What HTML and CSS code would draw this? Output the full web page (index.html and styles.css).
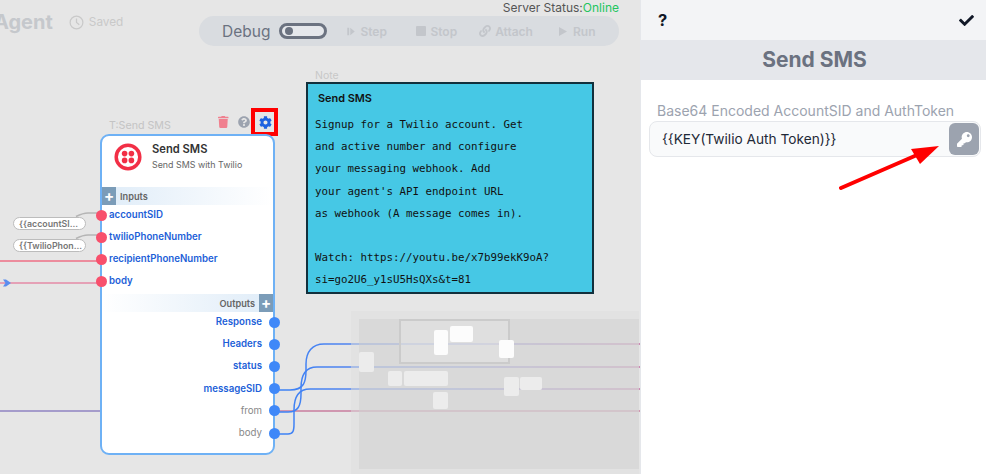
FILE: index.html
```html
<!DOCTYPE html>
<html lang="en">
<head>
    <meta charset="UTF-8">
    <meta name="viewport" content="width=device-width, initial-scale=1.0">
    <title>Send SMS - Agent</title>
    <link rel="stylesheet" href="styles.css">
</head>
<body>
    <div class="app">
        <!-- Canvas -->
        <main class="canvas">
            <header class="topbar">
                <div class="agent-info">
                    <h1 class="agent-name">Agent</h1>
                    <span class="saved">
                        <svg class="clock" viewBox="0 0 16 16"><circle cx="8" cy="8" r="6.8"/><path d="M8 3.6V8l3 2.4"/></svg>
                        Saved
                    </span>
                </div>
                <div class="controls">
                    <div class="server-status">Server Status:<span class="online">Online</span></div>
                    <div class="debug-bar">
                        <span class="debug-label">Debug</span>
                        <span class="toggle"><span class="toggle-dot"></span></span>
                        <span class="debug-btn btn-step">
                            <svg viewBox="0 0 10 12"><path d="M0 1h2.600v10H0zM4 1l6 5-6 5z"/></svg>Step
                        </span>
                        <span class="debug-btn btn-stop">
                            <svg viewBox="0 0 10 10"><rect width="10" height="10" rx="1"/></svg>Stop
                        </span>
                        <span class="debug-btn btn-attach">
                            <svg viewBox="0 0 512 512"><path d="M326.6 185.4c59.7 59.8 58.9 155.7.4 214.6l-67.2 67.2c-59.3 59.3-155.7 59.3-215 0-59.3-59.3-59.3-155.7 0-215l37.1-37.1c9.8-9.8 26.8-3.3 27.3 10.6.6 17.7 3.8 35.5 9.7 52.7 2 5.8.6 12.3-3.8 16.6l-13.1 13.1c-28 28-28.9 73.7-1.2 102 28 28.6 74.1 28.7 102.3.5l67.2-67.2c28.2-28.2 28.1-73.8 0-101.8-3.7-3.7-7.4-6.6-10.3-8.6-4.1-2.8-6.6-7.4-6.8-12.4-.4-10.6 3.3-21.5 11.7-29.8l21.1-21.1c5.5-5.5 14.2-6.2 20.6-1.7 7.3 5.1 14.2 10.9 20 16.8zM467.5 44.4c-59.3-59.3-155.7-59.3-215 0l-67.2 67.2-.4.4c-58.6 58.9-59.4 154.8.4 214.6 5.8 5.9 12.7 11.7 20 16.8 6.4 4.5 15.1 3.8 20.6-1.7l21.1-21.1c8.4-8.4 12.1-19.2 11.7-29.8-.2-5-2.7-9.6-6.8-12.4-2.9-2-6.6-4.9-10.3-8.6-28.1-28-28.2-73.6 0-101.8l67.2-67.2c28.2-28.2 74.3-28.1 102.3.5 27.7 28.3 26.8 74-1.2 102l-13.1 13.1c-4.4 4.3-5.8 10.8-3.8 16.6 5.9 17.2 9.1 35 9.7 52.7.5 13.9 17.5 20.4 27.3 10.6l37.1-37.1c59.3-59.3 59.3-155.7 0-215z"/></svg>Attach
                        </span>
                        <span class="debug-btn btn-run">
                            <svg viewBox="0 0 9 10"><path d="M0 0l9 5-9 5z"/></svg>Run
                        </span>
                    </div>
                </div>
            </header>

            <!-- Wires between nodes, minimap sits over them -->
            <svg class="wires" viewBox="0 0 640 474">
                <defs>
                    <linearGradient id="wireOut" gradientUnits="userSpaceOnUse" x1="275" y1="0" x2="640" y2="0">
                        <stop offset="0" stop-color="#3b82f6"/>
                        <stop offset="0.5" stop-color="#6f86e6"/>
                        <stop offset="1" stop-color="#c46ca4"/>
                    </linearGradient>
                </defs>
                <path class="wire-gray" d="M76 216.5c6-3 8-3.500 12-3.500h9"/>
                <path class="wire-gray" d="M76 238.500c6-3 8-3.500 12-3.500h9"/>
                <path class="wire-red" d="M0 261H100"/>
                <path class="wire-pink" d="M0 283H100"/>
                <path class="arrow-tip" d="M3 279.500h3l5 3.500-5 3.500h-3l2.500-3.500z"/>
                <path class="wire-purple" d="M0 411H100"/>
                <path class="wire-rose" d="M279 411H640"/>
                <path class="wire-out" d="M274 390h16c14 0 16-8 16-20v-6c0-12 6-20 18-20H640"/>
                <path class="wire-out" d="M274 412h14c10 0 13-6 13-18v-6c0-12 4-21 16-21H640"/>
                <path class="wire-out" d="M274 434h14c5 0 6-3 6-10v-14c0-12 4-21 16-21H640"/>
            </svg>

            <!-- Minimap -->
            <div class="minimap">
                <div class="minimap-inner">
                    <div class="mm-view"></div>
                    <div class="mm-box light mm-a"></div>
                    <div class="mm-box light mm-b"></div>
                    <div class="mm-box light mm-c"></div>
                    <div class="mm-box mm-d"></div>
                    <div class="mm-box mm-e"></div>
                    <div class="mm-box mm-f"></div>
                    <div class="mm-box mm-g"></div>
                    <div class="mm-box mm-h"></div>
                    <div class="mm-box mm-i"></div>
                </div>
            </div>

            <!-- Send SMS node -->
            <span class="node-type">T:Send SMS</span>
            <div class="node-tools">
                <svg class="tool-trash" viewBox="0 0 448 512"><path d="M432 32H312l-9.400-18.700A24 24 0 0 0 281.100 0H166.800a23.720 23.720 0 0 0-21.400 13.300L136 32H16A16 16 0 0 0 0 48v32a16 16 0 0 0 16 16h416a16 16 0 0 0 16-16V48a16 16 0 0 0-16-16zM53.200 467a48 48 0 0 0 47.900 45h245.800a48 48 0 0 0 47.900-45L416 128H32z"/></svg>
                <svg class="tool-help" viewBox="0 0 512 512"><path d="M504 256c0 136.997-111.043 248-248 248S8 392.997 8 256C8 119.083 119.043 8 256 8s248 111.083 248 248zM262.655 90c-54.497 0-89.255 22.957-116.549 63.758-3.536 5.286-2.353 12.415 2.715 16.258l34.699 26.310c5.205 3.947 12.621 3.008 16.665-2.122 17.864-22.658 30.113-35.797 57.303-35.797 20.429 0 45.698 13.148 45.698 32.958 0 14.976-12.363 22.667-32.534 33.976C247.128 238.528 216 254.941 216 296v4c0 6.627 5.373 12 12 12h56c6.627 0 12-5.373 12-12v-1.333c0-28.462 83.186-29.647 83.186-106.667 0-58.002-60.165-102-116.531-102zM256 338c-25.365 0-46 20.635-46 46 0 25.364 20.635 46 46 46s46-20.636 46-46c0-25.365-20.635-46-46-46z"/></svg>
                <span class="gear-box">
                    <svg class="tool-gear" viewBox="0 0 512 512"><path d="M487.400 315.700l-42.600-24.600c4.300-23.200 4.300-47 0-70.200l42.600-24.600c4.900-2.800 7.100-8.600 5.500-14-11.100-35.600-30-67.800-54.700-94.600-3.800-4.100-10-5.100-14.800-2.300L380.800 110c-17.900-15.400-38.500-27.300-60.800-35.100V25.800c0-5.600-3.900-10.500-9.400-11.700-36.700-8.200-74.300-7.800-109.200 0-5.500 1.200-9.400 6.100-9.400 11.700V75c-22.200 7.900-42.800 19.800-60.800 35.100L88.700 85.500c-4.900-2.800-11-1.900-14.800 2.300-24.700 26.700-43.600 58.900-54.700 94.600-1.700 5.400.6 11.200 5.500 14L67.300 221c-4.300 23.200-4.300 47 0 70.200l-42.600 24.600c-4.900 2.800-7.100 8.600-5.500 14 11.100 35.600 30 67.800 54.700 94.600 3.800 4.100 10 5.100 14.800 2.300l42.600-24.600c17.900 15.400 38.500 27.300 60.800 35.100v49.200c0 5.600 3.900 10.500 9.400 11.700 36.700 8.200 74.300 7.800 109.200 0 5.500-1.200 9.400-6.100 9.400-11.700v-49.200c22.200-7.900 42.800-19.800 60.800-35.100l42.600 24.600c4.900 2.800 11 1.900 14.800-2.300 24.700-26.700 43.600-58.900 54.700-94.600 1.500-5.500-.7-11.300-5.600-14.100zM256 336c-44.100 0-80-35.900-80-80s35.900-80 80-80 80 35.900 80 80-35.900 80-80 80z"/></svg>
                </span>
            </div>

            <div class="pill pill-sid">{{accountSI...</div>
            <div class="pill pill-phone">{{TwilioPhon...</div>

            <section class="node">
                <div class="node-head">
                    <svg class="twilio" viewBox="0 0 28 28">
                        <circle class="twilio-ring" cx="14" cy="14" r="11.800"/>
                        <circle cx="10.600" cy="10.600" r="2.800"/>
                        <circle cx="17.400" cy="10.600" r="2.800"/>
                        <circle cx="10.600" cy="17.400" r="2.800"/>
                        <circle cx="17.400" cy="17.400" r="2.800"/>
                    </svg>
                    <div class="node-text">
                        <div class="node-title">Send SMS</div>
                        <div class="node-sub">Send SMS with Twilio</div>
                    </div>
                </div>

                <div class="section-bar bar-in"><span class="plus">+</span>Inputs</div>
                <div class="ports ports-in">
                    <div class="port">accountSID<i class="dot"></i></div>
                    <div class="port">twilioPhoneNumber<i class="dot"></i></div>
                    <div class="port">recipientPhoneNumber<i class="dot"></i></div>
                    <div class="port">body<i class="dot"></i></div>
                </div>

                <div class="section-bar bar-out">Outputs<span class="plus">+</span></div>
                <div class="ports ports-out">
                    <div class="port">Response<i class="dot"></i></div>
                    <div class="port">Headers<i class="dot"></i></div>
                    <div class="port">status<i class="dot"></i></div>
                    <div class="port">messageSID<i class="dot"></i></div>
                    <div class="port muted">from<i class="dot"></i></div>
                    <div class="port muted">body<i class="dot"></i></div>
                </div>
            </section>

            <!-- Note -->
            <span class="note-label">Note</span>
            <section class="note">
                <h3>Send SMS</h3>
                <pre>Signup for a Twilio account. Get
and active number and configure
your messaging webhook. Add
your agent's API endpoint URL
as webhook (A message comes in).

Watch: https://youtu.be/x7b99ekK9oA?
si=go2U6_y1sU5HsQXs&amp;t=81</pre>
            </section>
        </main>

        <!-- Settings panel -->
        <aside class="panel">
            <div class="panel-top">
                <span class="panel-help">?</span>
                <svg class="panel-check" viewBox="0 0 512 512"><path d="M173.898 439.404l-166.400-166.400c-9.997-9.997-9.997-26.206 0-36.204l36.203-36.204c9.997-9.998 26.207-9.998 36.204 0L192 312.690 432.095 72.596c9.997-9.997 26.207-9.997 36.204 0l36.203 36.204c9.997 9.997 9.997 26.206 0 36.204l-294.400 294.401c-9.998 9.997-26.207 9.997-36.204-.001z"/></svg>
            </div>
            <h2 class="panel-title">Send SMS</h2>
            <div class="panel-body">
                <label class="field-label">Base64 Encoded AccountSID and AuthToken</label>
                <div class="field">
                    <span class="field-value">{{KEY(Twilio Auth Token)}}</span>
                    <span class="key-btn">
                        <svg viewBox="0 0 512 512"><path d="M512 176.001C512 273.203 433.202 352 336 352c-11.220 0-22.190-1.062-32.827-3.069l-24.012 27.014A23.999 23.999 0 0 1 261.223 384H224v40c0 13.255-10.745 24-24 24h-40v40c0 13.255-10.745 24-24 24H24c-13.255 0-24-10.745-24-24v-78.059c0-6.365 2.529-12.470 7.029-16.971l161.802-161.802C163.108 213.814 160 195.271 160 176 160 78.798 238.797.001 335.999 0 433.488-.001 512 78.511 512 176.001zM336 128c0 26.510 21.490 48 48 48s48-21.490 48-48-21.490-48-48-48-48 21.490-48 48z"/></svg>
                    </span>
                </div>
            </div>
            <svg class="red-arrow" viewBox="0 0 110 60">
                <path class="red-arrow-line" d="M2 47L78 14"/>
                <path class="red-arrow-head" d="M100 5L72 8l9 15z"/>
            </svg>
        </aside>
    </div>
</body>
</html>
```

FILE: styles.css
```css
* {
    box-sizing: border-box;
}
html, body {
    margin: 0;
    padding: 0;
    height: 100%;
    overflow: hidden;
}
body {
    font-family: Inter, "Liberation Sans", sans-serif;
    color: #333;
    background-color: #fff;
}
.app {
    display: flex;
    height: 474px;
}

/* Canvas */
.canvas {
    position: relative;
    width: 640px;
    flex: none;
    overflow: hidden;
    background-color: #e6e6e6;
}
.topbar {
    display: flex;
    justify-content: space-between;
    padding-right: 21px;
}
.agent-info {
    display: flex;
    align-items: center;
    gap: 16px;
    height: 44px;
    margin-left: -6px;
}
.agent-name {
    margin: 0;
    font-size: 20px;
    font-weight: 700;
    color: #c5c8cc;
}
.saved {
    display: flex;
    align-items: center;
    gap: 5px;
    font-size: 11.8px;
    color: #c9c9c9;
}
.clock {
    width: 15px;
    height: 15px;
    fill: none;
    stroke: #c9c9c9;
    stroke-width: 1.3;
}
.controls {
    width: 420px;
}
.server-status {
    height: 16px;
    line-height: 15px;
    font-size: 12px;
    text-align: right;
    color: #555;
}
.online {
    color: #22c55e;
}
.debug-bar {
    display: flex;
    align-items: center;
    height: 30px;
    padding-left: 23px;
    border-radius: 15px;
    background-color: #d9dce0;
}
.debug-label {
    font-size: 15.5px;
    color: #6b7280;
}
.toggle {
    display: flex;
    align-items: center;
    width: 48px;
    height: 16px;
    margin-left: 9px;
    padding-left: 3px;
    border: 3px solid #6b7280;
    border-radius: 8px;
    background-color: #e5e7eb;
}
.toggle-dot {
    width: 8px;
    height: 8px;
    border-radius: 50%;
    background-color: #6b7280;
}
.debug-btn {
    display: flex;
    align-items: center;
    font-size: 12px;
    font-weight: 600;
    color: #c3c6cb;
}
.debug-btn svg {
    fill: #c3c6cb;
}
.btn-step {
    gap: 5px;
    margin-left: 20px;
}
.btn-step svg {
    width: 8px;
    height: 9px;
}
.btn-stop {
    gap: 4.500px;
    margin-left: 29px;
}
.btn-stop svg {
    width: 10px;
    height: 10px;
}
.btn-attach {
    gap: 4px;
    margin-left: 22px;
}
.btn-attach svg {
    width: 12px;
    height: 12px;
}
.btn-run {
    gap: 6px;
    margin-left: 26px;
}
.btn-run svg {
    width: 8px;
    height: 9px;
}

/* Wires */
.wires {
    position: absolute;
    left: 0;
    top: 0;
    width: 640px;
    height: 474px;
    fill: none;
    stroke-width: 1.5;
}
.wire-gray {
    stroke: #b5b5b5;
}
.wire-red {
    stroke: #ee6e85;
}
.wire-pink {
    stroke: #e58aa6;
}
.arrow-tip {
    fill: #5b8def;
    stroke: none;
}
.wire-purple {
    stroke: #8f83c2;
}
.wire-rose {
    stroke: #c87c9e;
}
.wire-out {
    stroke: url(#wireOut);
}

/* Minimap */
.minimap {
    position: absolute;
    left: 351px;
    top: 311px;
    width: 288px;
    height: 163px;
    padding: 8px 0 5px 8px;
    background-color: rgba(222, 222, 222, 0.5);
}
.minimap-inner {
    position: relative;
    width: 100%;
    height: 100%;
    background-color: rgba(208, 208, 208, 0.5);
}
.mm-view {
    position: absolute;
    left: 40px;
    top: 0;
    width: 111px;
    height: 45px;
    border: 2px solid #cbcbcb;
    background-color: rgba(235, 235, 235, 0.35);
}
.mm-box {
    position: absolute;
    border-radius: 2px;
    background-color: #ececec;
}
.mm-box.light {
    background-color: #fcfcfc;
}
.mm-a { left: 75px; top: 11px; width: 14px; height: 25px; }
.mm-b { left: 91px; top: 7px; width: 23px; height: 16px; }
.mm-c { left: 140px; top: 21px; width: 15px; height: 18px; }
.mm-d { left: 0; top: 33px; width: 15px; height: 20px; }
.mm-e { left: 29px; top: 52px; width: 14px; height: 15px; }
.mm-f { left: 45px; top: 52px; width: 44px; height: 15px; }
.mm-g { left: 145px; top: 58px; width: 15px; height: 19px; }
.mm-h { left: 161px; top: 58px; width: 22px; height: 13px; }
.mm-i { left: 74px; top: 73px; width: 15px; height: 17px; }

/* Node */
.node-type {
    position: absolute;
    left: 109px;
    top: 119px;
    font-size: 10.7px;
    color: #c4c4c4;
}
.node-tools {
    position: absolute;
    left: 218px;
    top: 108px;
    display: flex;
    align-items: center;
}
.tool-trash {
    width: 10.500px;
    height: 12px;
    fill: #f0808f;
}
.tool-help {
    width: 12px;
    height: 12px;
    margin-left: 9.500px;
    fill: #9ca3af;
}
.gear-box {
    display: flex;
    align-items: center;
    justify-content: center;
    width: 27px;
    height: 28px;
    margin-left: 1px;
    padding-left: 1px;
    border: 4px solid #f00;
}
.tool-gear {
    width: 13px;
    height: 13px;
    fill: #1d62e0;
}
.pill {
    position: absolute;
    left: 13px;
    width: 73px;
    height: 13px;
    padding-left: 5px;
    line-height: 11px;
    font-size: 8.800px;
    font-weight: 600;
    white-space: nowrap;
    color: #777;
    border: 1.5px solid #bcbcbc;
    border-radius: 7px;
    background-color: #fff;
}
.pill-sid {
    top: 216.500px;
}
.pill-phone {
    top: 238.500px;
}
.node {
    position: absolute;
    left: 100px;
    top: 134px;
    width: 175px;
    height: 321px;
    border: 2px solid #6eb1f5;
    border-radius: 9px;
    background-color: #fff;
}
.node-head {
    display: flex;
    gap: 10px;
    height: 51px;
    padding: 7px 0 0 12px;
}
.node-text {
    margin-top: -2px;
}
.twilio {
    width: 28px;
    height: 28px;
    fill: #f22f46;
    flex: none;
}
.twilio-ring {
    fill: none;
    stroke: #f22f46;
    stroke-width: 3.5;
}
.node-title {
    font-size: 11.2px;
    line-height: 16px;
    font-weight: 600;
    color: #333;
}
.node-sub {
    font-size: 8.900px;
    line-height: 15px;
    color: #666;
}
.section-bar {
    display: flex;
    align-items: center;
    height: 18px;
    font-size: 9.2px;
    font-weight: 600;
    color: #666;
}
.bar-in {
    gap: 4px;
    background: linear-gradient(to right, #dfecf8, #fff);
}
.bar-out {
    justify-content: flex-end;
    gap: 4px;
    margin-top: 2px;
    background: linear-gradient(to left, #dfecf8, #fff);
}
.plus {
    width: 14px;
    height: 18px;
    line-height: 17px;
    text-align: center;
    font-size: 15px;
    font-weight: 700;
    color: #fff;
    background-color: #7b9cb8;
}
.port {
    position: relative;
    display: flex;
    align-items: center;
    padding-bottom: 1px;
    font-size: 9.700px;
    font-weight: 600;
    white-space: nowrap;
    color: #1d5fd8;
}
.ports-in {
    margin-top: -1px;
}
.ports-in .port {
    height: 22px;
    padding-left: 7px;
}
.ports-out .port {
    justify-content: flex-end;
    height: 22.2px;
    padding-right: 11px;
}
.ports-out {
    margin-top: -1px;
}
.port.muted {
    font-weight: 400;
    color: #888;
}
.dot {
    position: absolute;
    top: 50%;
    width: 11px;
    height: 11px;
    margin-top: -5.5px;
    border-radius: 50%;
}
.ports-in .dot {
    left: -6.500px;
    background-color: #f8506c;
}
.ports-out .dot {
    right: -6.500px;
    background-color: #3f88f8;
}

/* Note */
.note-label {
    position: absolute;
    left: 315px;
    top: 69px;
    font-size: 10.5px;
    color: #c8c8c8;
}
.note {
    position: absolute;
    left: 306px;
    top: 82px;
    width: 288px;
    height: 212px;
    padding: 0 0 0 7px;
    border: 2px solid #12303c;
    background-color: #46c8e5;
}
.note h3 {
    margin: 7px 0 0 3px;
    font-size: 10.900px;
    line-height: 14px;
    font-weight: 600;
    color: #111;
}
.note pre {
    margin: 9px 0 0;
    font-family: "DejaVu Sans Mono", "Liberation Mono", monospace;
    font-size: 10.8px;
    line-height: 22.2px;
    color: #111;
}

/* Settings panel */
.panel {
    position: relative;
    flex: 1;
    border-left: 1px solid #e5e7eb;
    background-color: #fff;
}
.panel-top {
    display: flex;
    align-items: center;
    justify-content: space-between;
    height: 40px;
    padding: 0 12px 0 17px;
    background-color: #f3f4f6;
}
.panel-help {
    font-size: 16.500px;
    font-weight: 700;
    color: #111827;
}
.panel-check {
    width: 15px;
    height: 15px;
    fill: #111827;
}
.panel-title {
    margin: 0;
    height: 40px;
    padding-left: 2px;
    line-height: 39px;
    text-align: center;
    font-size: 21px;
    font-weight: 700;
    color: #6b7280;
    background-color: #e5e7eb;
}
.panel-body {
    padding: 22px 5px 0 8px;
}
.field-label {
    display: block;
    padding-left: 8px;
    font-size: 14px;
    line-height: 17px;
    color: #9ca3af;
}
.field {
    display: flex;
    align-items: center;
    justify-content: space-between;
    height: 36px;
    margin-top: 2px;
    padding: 0 1px 0 12px;
    border: 1px solid #e5e7eb;
    border-radius: 8px;
    background-color: #f9fafb;
}
.field-value {
    font-size: 13.700px;
    color: #1f2937;
}
.key-btn {
    display: flex;
    align-items: center;
    justify-content: center;
    width: 30px;
    height: 32px;
    border-radius: 6px;
    background-color: #9ca3af;
}
.key-btn svg {
    width: 15px;
    height: 15px;
    fill: #fff;
}
.red-arrow {
    position: absolute;
    left: 198px;
    top: 141px;
    width: 110px;
    height: 60px;
}
.red-arrow-line {
    fill: none;
    stroke: #f00;
    stroke-width: 4;
    stroke-linecap: round;
}
.red-arrow-head {
    fill: #f00;
}
```
